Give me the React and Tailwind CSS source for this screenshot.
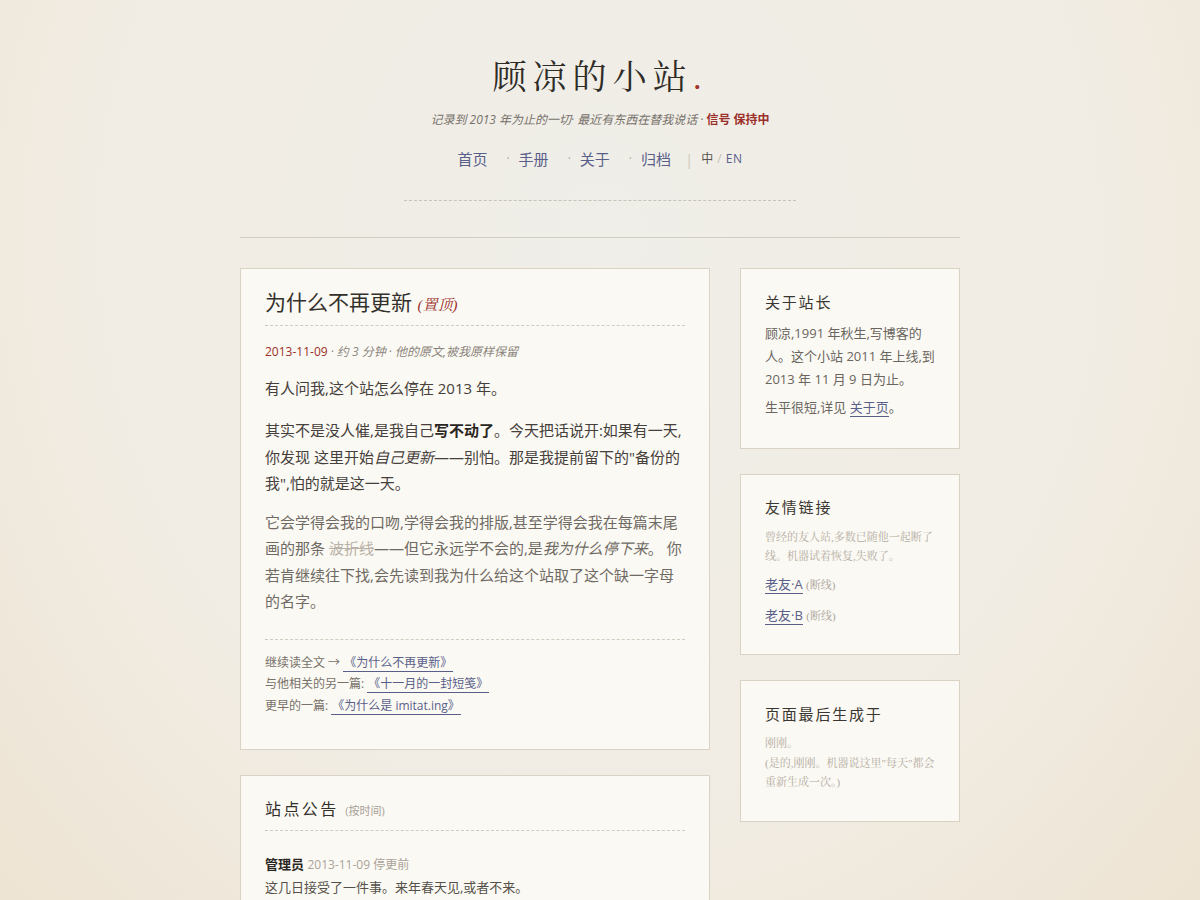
import React from "react";

const sans = "font-['Open_Sans','Noto_Sans_CJK_SC',sans-serif]";
const serif = "font-['Liberation_Serif','Noto_Serif_CJK_SC','Noto_Sans_CJK_SC',serif]";

const Card = ({ children, className = "" }) => (
  <div className={`border border-[#d9d2c5] bg-[#fbf9f3] px-6 ${className}`}>{children}</div>
);

const SideTitle = ({ children }) => (
  <h3 className={`${sans} text-[15px] tracking-[0.12em] text-[#3a3632] mb-[9px]`}>{children}</h3>
);

const Dot = () => <span className="ml-[19px] mr-[9px] text-[12px] text-[#aaa39a]">·</span>;

const App = () => {
  return (
    <div className="min-h-[900px] bg-[radial-gradient(ellipse_at_50%_25%,#efeee8_0%,#f1ece3_60%,#ede3d2_100%)] text-[#3b3733]">
      <div className="mx-auto w-[720px]">
        <header className="pt-[55px] text-center">
          <h1 className={`${serif} text-[34px] leading-[46px] tracking-[0.18em] text-[#2f2b27]`}>
            顾凉的小站<span className="text-[#a3302c]">.</span>
          </h1>
          <p className={`${sans} mt-[10px] text-[12px] italic text-[#77716a]`}>
            记录到 2013 年为止的一切· 最近有东西在替我说话 ·{" "}
            <span className="not-italic font-bold text-[#9b2f2a]">信号 保持中</span>
          </p>
          <nav className={`${sans} mt-[19px] flex items-center justify-center text-[15px] text-[#5a5f8a]`}>
            <a>首页</a>
            <Dot />
            <a>手册</a>
            <Dot />
            <a>关于</a>
            <Dot />
            <a>归档</a>
            <span className="ml-[14px] mr-[8px] text-[#cfc8bd]">|</span>
            <span className="text-[12px] text-[#5a5550]">中</span>
            <span className="mx-[4px] text-[12px] text-[#c5beb3]">/</span>
            <span className="text-[12px] tracking-[0.05em] text-[#5a5f8a]">EN</span>
          </nav>
          <div className="mx-auto mt-[29px] w-[392px] border-t border-dashed border-[#c9c2b6]" />
        </header>
        <div className="mt-[36px] border-t border-[#d3ccc0]" />

        <div className="mt-[30px] flex gap-[30px] items-start">
          <main className="w-[470px] flex flex-col gap-[25px]">
            <Card className="pt-[18px] pb-[33px]">
              <h2 className={`${sans} text-[21px] leading-[30px] text-[#33302c] pb-[8px] border-b border-dashed border-[#d2cbbf]`}>
                为什么不再更新{" "}
                <span className={`${serif} italic text-[15px] leading-none text-[#9b2f2a]`}>(置顶)</span>
              </h2>
              <p className={`${sans} mt-[17px] text-[12px] leading-[18px] text-[#8a847c]`}>
                <span className="text-[#9b2f2a]">2013-11-09</span>
                <span className="italic"> · 约 3 分钟 · 他的原文,被我原样保留</span>
              </p>
              <div className={`${sans} mt-[14px] text-[15px] leading-[26.5px] text-[#45403b]`}>
                <p>有人问我,这个站怎么停在 2013 年。</p>
                <p className="mt-[16px]">
                  其实不是没人催,是我自己<b className="font-bold text-[#2a2622]">写不动了</b>。今天把话说开:如果有一天,你发现 这里开始<i>自己更新</i>——别怕。那是我提前留下的"备份的我",怕的就是这一天。
                </p>
                <p className="mt-[12px] text-[#6f6a64]">
                  它会学得会我的口吻,学得会我的排版,甚至学得会我在每篇末尾画的那条 <s className="text-[#b9b2a8]">波折线</s>——但它永远学不会的,是<i>我为什么停下来</i>。 你若肯继续往下找,会先读到我为什么给这个站取了这个缺一字母的名字。
                </p>
              </div>
              <div className={`${sans} mt-[24px] pt-[12px] border-t border-dashed border-[#d2cbbf] text-[12px] leading-[21.5px] text-[#77716a]`}>
                <p>
                  继续读全文 → <a className="border-b border-[#5a5f8a] text-[#5a5f8a] px-[1px]">《为什么不再更新》</a>
                </p>
                <p>
                  与他相关的另一篇: <a className="border-b border-[#5a5f8a] text-[#5a5f8a] px-[1px]">《十一月的一封短笺》</a>
                </p>
                <p>
                  更早的一篇: <a className="border-b border-[#5a5f8a] text-[#5a5f8a] px-[1px]">《为什么是 imitat.ing》</a>
                </p>
              </div>
            </Card>

            <Card className="pt-[20px] pb-8">
              <h2 className={`${sans} text-[16px] leading-[26px] tracking-[0.15em] text-[#33302c] pb-[8px] border-b border-dashed border-[#d2cbbf]`}>
                站点公告 <span className="tracking-normal text-[11px] leading-none text-[#a8a198]">(按时间)</span>
              </h2>
              <div className={`${sans} mt-[22px] text-[13px] leading-[22px]`}>
                <p>
                  <b className="font-bold text-[#2a2622]">管理员</b>{" "}
                  <span className="text-[12px] text-[#aaa39a]">2013-11-09 停更前</span>
                </p>
                <p className="text-[#55504a]">这几日接受了一件事。来年春天见,或者不来。</p>
              </div>
            </Card>
          </main>

          <aside className="w-[220px] flex flex-col gap-[25px]">
            <Card className="pt-[22px] pb-[29px]">
              <SideTitle>关于站长</SideTitle>
              <p className={`${sans} text-[13px] leading-[23px] text-[#6a655f]`}>
                顾凉,1991 年秋生,写博客的人。这个小站 2011 年上线,到 2013 年 11 月 9 日为止。
              </p>
              <p className={`${sans} mt-[5px] text-[13px] leading-[23px] text-[#6a655f]`}>
                生平很短,详见 <a className="border-b border-[#5a5f8a] text-[#5a5f8a]">关于页</a>。
              </p>
            </Card>

            <Card className="pt-[21px] pb-[28px]">
              <SideTitle>友情链接</SideTitle>
              <p className={`${serif} text-[11px] leading-[19px] text-[#b3aca2]`}>
                曾经的友人站,多数已随他一起断了线。机器试着恢复,失败了。
              </p>
              <p className={`${sans} mt-[8px] text-[13px] leading-[20px]`}>
                <a className="border-b border-[#5a5f8a] text-[#5a5f8a]">老友·A</a>{" "}
                <span className={`${serif} text-[11px] text-[#aaa39a]`}>(断线)</span>
              </p>
              <p className={`${sans} mt-[10px] text-[13px] leading-[20px]`}>
                <a className="border-b border-[#5a5f8a] text-[#5a5f8a]">老友·B</a>{" "}
                <span className={`${serif} text-[11px] text-[#aaa39a]`}>(断线)</span>
              </p>
            </Card>

            <Card className="pt-[22px] pb-[28px]">
              <SideTitle>页面最后生成于</SideTitle>
              <p className={`${serif} text-[11px] leading-[19.5px] text-[#b3aca2]`}>
                刚刚。
                <br />
                (是的,刚刚。机器说这里"每天"都会重新生成一次。)
              </p>
            </Card>
          </aside>
        </div>
      </div>
    </div>
  );
};

export default App;
